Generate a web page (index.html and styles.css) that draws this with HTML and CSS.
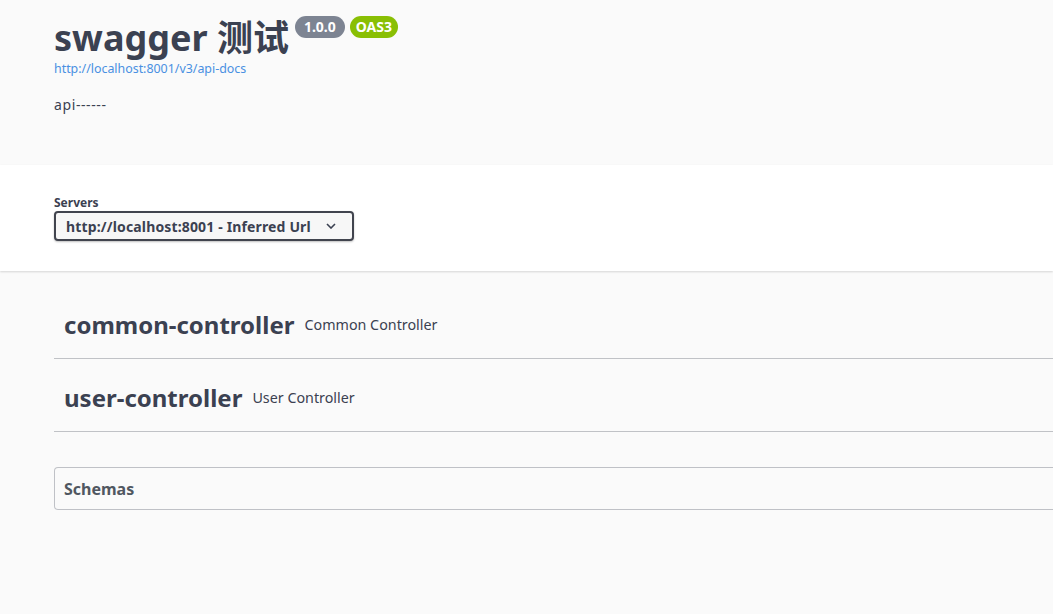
FILE: index.html
```html
<!DOCTYPE html>
<html lang="zh">
<head>
    <meta charset="UTF-8">
    <meta name="viewport" content="width=device-width, initial-scale=1.0">
    <title>swagger 测试</title>
    <link rel="stylesheet" href="styles.css">
</head>
<body>
    <div class="info-block">
        <div class="wrapper">
            <h2 class="title">
                <span>swagger 测试</span>
                <span class="badge version">1.0.0</span>
                <span class="badge oas">OAS3</span>
            </h2>
            <a class="base-url" href="#">http://localhost:8001/v3/api-docs</a>
            <div class="description">api------</div>
        </div>
    </div>

    <div class="scheme-container">
        <div class="wrapper">
            <div class="servers-label">Servers</div>
            <div class="select">
                <span>http://localhost:8001 - Inferred Url</span>
                <svg class="chevron" width="10" height="6" viewBox="0 0 10 6">
                    <path d="M1 1 L5 5 L9 1" fill="none" stroke="#3b4151" stroke-width="1.6"/>
                </svg>
            </div>
        </div>
    </div>

    <div class="wrapper tags">
        <h3 class="opblock-tag">
            <span class="tag-name">common-controller</span>
            <small>Common Controller</small>
        </h3>
        <h3 class="opblock-tag">
            <span class="tag-name">user-controller</span>
            <small>User Controller</small>
        </h3>

        <div class="models">
            <h4>Schemas</h4>
        </div>
    </div>
</body>
</html>
```

FILE: styles.css
```css
body {
    margin: 0;
    background: #fafafa;
    color: #3b4151;
    font-family: "Noto Sans", "Noto Sans CJK SC", sans-serif;
}
.wrapper {
    margin: 0 0 0 54px;
}
.info-block {
    height: 165px;
    padding-top: 16px;
    box-sizing: border-box;
}
.title {
    display: flex;
    align-items: flex-start;
    margin: 0;
    font-size: 36px;
    line-height: 44px;
    font-weight: 700;
}
.badge {
    height: 22px;
    line-height: 22px;
    padding: 0 6px;
    border-radius: 57px;
    color: #fff;
    font-size: 14px;
    font-weight: 700;
    margin-left: 5px;
}
.version {
    background: #7d8492;
    padding: 0 9px;
    margin-left: 6px;
}
.oas {
    background: #89bf04;
}
.base-url {
    display: block;
    font-size: 12.4px;
    line-height: 16px;
    color: #4990e2;
    text-decoration: none;
    margin-top: 1px;
}
.description {
    font-size: 14px;
    line-height: 20px;
    margin-top: 18px;
    letter-spacing: 0.6px;
}
.scheme-container {
    background: #fff;
    padding: 30px 0;
    box-shadow: 0 1px 2px 0 rgba(0,0,0,0.15);
}
.servers-label {
    font-size: 12px;
    font-weight: 700;
    line-height: 16px;
}
.select {
    display: flex;
    align-items: center;
    justify-content: space-between;
    width: 300px;
    height: 30px;
    box-sizing: border-box;
    padding: 0 16px 0 10px;
    border: 2px solid #41444e;
    border-radius: 4px;
    background: #f7f7f7;
    box-shadow: 0 1px 2px 0 rgba(0,0,0,0.25);
    font-size: 14px;
    font-weight: 700;
    letter-spacing: 0.15px;
}
.tags {
    padding-top: 20px;
}
.opblock-tag {
    display: flex;
    align-items: center;
    height: 67px;
    margin: 0 0 5px;
    padding: 0 0 0 10px;
    border-bottom: 1px solid rgba(59,65,81,0.3);
    font-size: 24px;
    font-weight: 700;
}
.opblock-tag small {
    font-size: 14.3px;
    font-weight: 400;
    margin-left: 10px;
}
.models {
    margin-top: 35px;
    height: 43px;
    box-sizing: border-box;
    border: 1px solid rgba(59,65,81,0.3);
    border-right: none;
    border-radius: 4px 0 0 4px;
    display: flex;
    align-items: center;
    padding-left: 9px;
}
.models h4 {
    margin: 0;
    font-size: 16px;
    color: #505761;
}
```
